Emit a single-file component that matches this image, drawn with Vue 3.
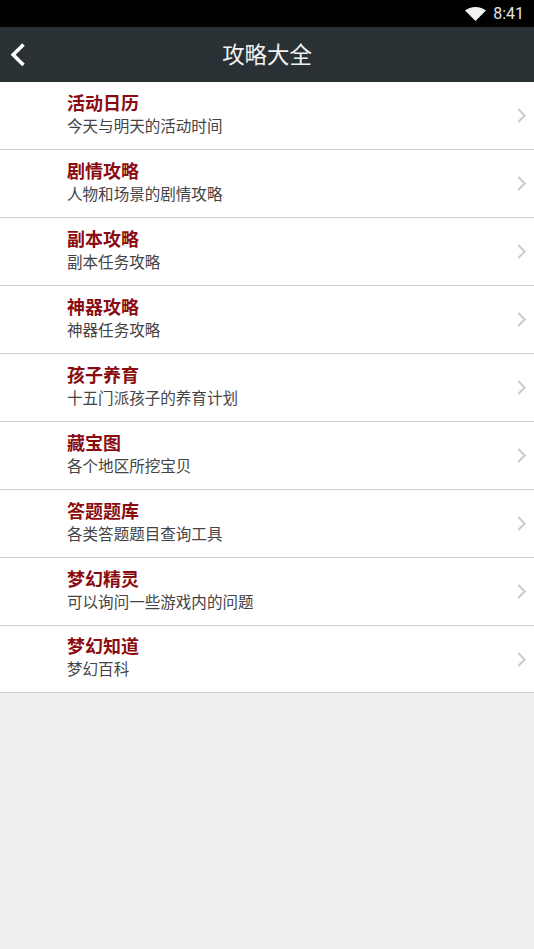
<script setup>
const items = [
  { title: '活动日历', desc: '今天与明天的活动时间' },
  { title: '剧情攻略', desc: '人物和场景的剧情攻略' },
  { title: '副本攻略', desc: '副本任务攻略' },
  { title: '神器攻略', desc: '神器任务攻略' },
  { title: '孩子养育', desc: '十五门派孩子的养育计划' },
  { title: '藏宝图', desc: '各个地区所挖宝贝' },
  { title: '答题题库', desc: '各类答题题目查询工具' },
  { title: '梦幻精灵', desc: '可以询问一些游戏内的问题' },
  { title: '梦幻知道', desc: '梦幻百科' },
]
</script>

<template>
  <div class="page">
    <div class="status">
      <svg class="wifi" width="21" height="14" viewBox="0 0 21 14">
        <path d="M0 3.4C2.9 1.3 6.5 0 10.5 0S18.100 1.300 21 3.400L10.500 14z" fill="#f2f2f2" />
      </svg>
      <span class="time">8:41</span>
    </div>
    <div class="bar">
      <svg class="back" width="16" height="26" viewBox="0 0 16 26">
        <path d="M13.500 2.500 3.200 12.800 13.500 23" fill="none" stroke="#fff" stroke-width="3.600" />
      </svg>
      <span class="bar-title">攻略大全</span>
    </div>
    <ul class="list">
      <li v-for="item in items" :key="item.title" class="row">
        <div class="text">
          <div class="title">{{ item.title }}</div>
          <div class="desc">{{ item.desc }}</div>
        </div>
        <svg class="chev" width="10" height="15" viewBox="0 0 10 15">
          <path d="M1.200 1 7.800 7.500 1.200 14" fill="none" stroke="#cccccc" stroke-width="2" />
        </svg>
      </li>
    </ul>
  </div>
</template>

<style>
html, body { margin: 0; padding: 0; }
</style>

<style scoped>
.page {
  width: 534px;
  height: 949px;
  background: #eeeeee;
  overflow: hidden;
  display: flex;
  flex-direction: column;
  font-family: "Liberation Sans", "Noto Sans CJK SC", sans-serif;
}
.status {
  height: 27px;
  flex: none;
  background: #000;
  display: flex;
  align-items: center;
  justify-content: flex-end;
  padding-right: 10px;
  box-sizing: border-box;
}
.wifi { margin-right: 7px; }
.time {
  color: #e6e6e6;
  font-family: Roboto, sans-serif;
  font-size: 16px;
  line-height: 27px;
}
.bar {
  height: 55px;
  flex: none;
  box-sizing: border-box;
  padding-bottom: 4px;
  background: #293135;
  position: relative;
  display: flex;
  align-items: center;
  justify-content: center;
}
.back { position: absolute; left: 10px; top: 15px; }
.bar-title {
  color: #f2f2f2;
  font-size: 22.400px;
}
.list {
  list-style: none;
  margin: 0;
  padding: 0;
  background: #fff;
}
.row {
  height: 68px;
  box-sizing: border-box;
  border-bottom: 1px solid #cfcfcf;
  display: flex;
  align-items: center;
  padding-left: 67px;
  padding-right: 7px;
}
.row:last-child { height: 67px; }
.row:last-child .text { margin-bottom: 1px; }
.text { flex: 1; min-width: 0; }
.title {
  color: #8b0c10;
  font-size: 18px;
  font-weight: 700;
  line-height: 22px;
}
.desc {
  color: #444;
  font-size: 15.550px;
  line-height: 23px;
}
</style>
